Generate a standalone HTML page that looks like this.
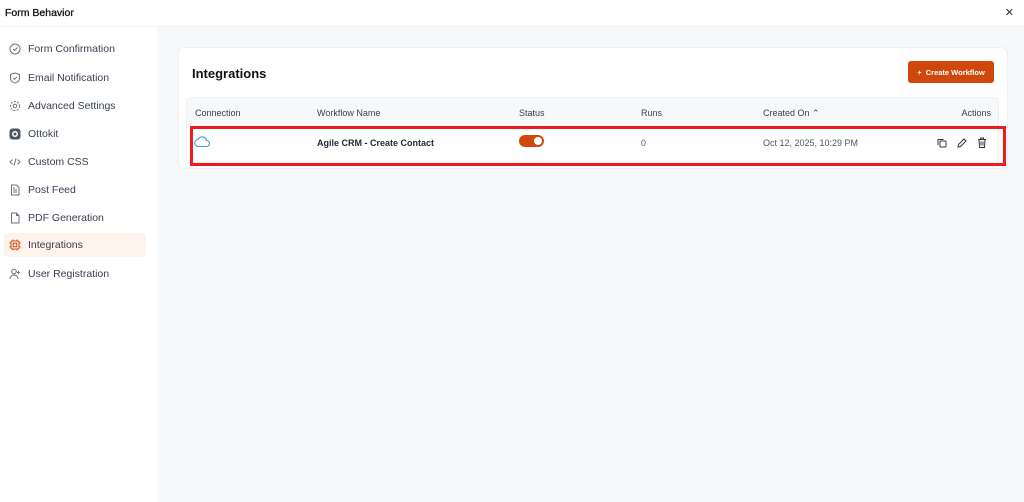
<!DOCTYPE html>
<html><head><style>
*{box-sizing:border-box;margin:0;padding:0}
body{width:1024px;height:502px;overflow:hidden;font-family:"Liberation Sans",sans-serif;background:#fff;position:relative;color:#111827}
.top{position:absolute;left:0;top:0;width:1024px;height:27px;border-bottom:1px solid #eef0f3;background:#fff}
.top .t{position:absolute;left:5px;top:7px;font-size:10.5px;color:#111;-webkit-text-stroke:0.3px #111}
.top .x{position:absolute;right:10px;top:6px;font-size:11px;color:#333}
.side{position:absolute;left:0;top:27px;width:157px;height:475px;background:#fff}
.item{position:absolute;left:4px;width:142px;height:24px;border-radius:4px;font-size:10.5px;color:#374151;display:flex;align-items:center}
.item svg{margin-left:5px;margin-right:7px;width:12px;height:12px}
.item.act{background:#fff3ec}
.main{position:absolute;left:157px;top:27px;width:867px;height:475px;background:#f6f8fa}
.card{position:absolute;left:21px;top:20px;width:830px;height:122px;background:#fff;border-radius:6px;border:1px solid #eef0f3}
.card h1{position:absolute;left:13px;top:18px;font-size:13px;font-weight:bold;color:#111}
.btn{position:absolute;left:729px;top:13px;width:86px;height:22px;background:#d0470c;border-radius:3px;color:#fff;font-size:7.5px;font-weight:bold;display:flex;align-items:center;justify-content:center}
.tbl{position:absolute;left:7px;top:49px;width:813px;height:66px;background:#f7f8fa;border-radius:5px;border:1px solid #eef0f3}
.th{position:absolute;top:10px;font-size:9px;color:#374151}
.row{position:absolute;left:0;top:27px;width:811px;height:37px;background:#fff}
.td{position:absolute;top:13px;font-size:9px;color:#111}
.red{position:absolute;left:190px;top:126px;width:816px;height:40px;border:3px solid #ef1c1c}
</style></head><body>
<div class="top"><span class="t">Form Behavior</span><span class="x">✕</span></div>
<div class="side">
<div class="item" style="top:10px"><svg viewBox="0 0 12 12" fill="none" stroke="#6b7280" stroke-width="1"><circle cx="6" cy="6" r="5"/><path d="M4 6l1.5 1.5L8.5 4.5"/></svg>Form Confirmation</div>
<div class="item" style="top:39px"><svg viewBox="0 0 12 12" fill="none" stroke="#6b7280" stroke-width="1"><path d="M6 1l4.5 1.5v3.5c0 3-2.5 4.5-4.5 5-2-.5-4.5-2-4.5-5V2.5z"/><path d="M4.2 6l1.3 1.3L8 4.8"/></svg>Email Notification</div>
<div class="item" style="top:67px"><svg viewBox="0 0 12 12" fill="none" stroke="#6b7280" stroke-width="1"><circle cx="6" cy="6" r="1.8"/><circle cx="6" cy="6" r="4.5" stroke-dasharray="2 1.3"/></svg>Advanced Settings</div>
<div class="item" style="top:95px"><svg viewBox="0 0 12 12"><rect x="0.5" y="0.5" width="11" height="11" rx="3" fill="#4b5563"/><circle cx="6" cy="6" r="3" fill="#fff"/><circle cx="6" cy="6" r="1.5" fill="#4b5563"/></svg>Ottokit</div>
<div class="item" style="top:123px"><svg viewBox="0 0 12 12" fill="none" stroke="#6b7280" stroke-width="1"><path d="M3.5 3.5L1 6l2.5 2.5M8.5 3.5L11 6 8.5 8.5M7 2.5L5 9.5"/></svg>Custom CSS</div>
<div class="item" style="top:151px"><svg viewBox="0 0 12 12" fill="none" stroke="#6b7280" stroke-width="1"><path d="M2.5 1h5l2.5 2.5V11h-7.5z"/><path d="M4 6h4M4 8h4M4 4h2"/></svg>Post Feed</div>
<div class="item" style="top:179px"><svg viewBox="0 0 12 12" fill="none" stroke="#6b7280" stroke-width="1"><path d="M2.5 1h5l2.5 2.5V11h-7.5z"/><path d="M7.5 1v2.5H10"/></svg>PDF Generation</div>
<div class="item act" style="top:206px"><svg viewBox="0 0 12 12" fill="none" stroke="#d0470c" stroke-width="1"><rect x="2" y="2" width="8" height="8" rx="1.5"/><rect x="4.2" y="4.2" width="3.6" height="3.6"/><path d="M4 0.5v1.5M8 0.5v1.5M4 10v1.5M8 10v1.5M0.5 4h1.5M0.5 8h1.5M10 4h1.5M10 8h1.5"/></svg>Integrations</div>
<div class="item" style="top:235px"><svg viewBox="0 0 12 12" fill="none" stroke="#6b7280" stroke-width="1"><circle cx="5" cy="3.5" r="2.3"/><path d="M1 11c0-2.5 1.8-4 4-4s4 1.5 4 4M9.5 3v3M8 4.5h3"/></svg>User Registration</div>
</div>
<div class="main"><div class="card">
<h1>Integrations</h1>
<div class="btn">+&nbsp;&nbsp;Create Workflow</div>
<div class="tbl">
<span class="th" style="left:8px">Connection</span>
<span class="th" style="left:130px">Workflow Name</span>
<span class="th" style="left:332px">Status</span>
<span class="th" style="left:454px">Runs</span>
<span class="th" style="left:576px">Created On ⌃</span>
<span class="th" style="right:7px">Actions</span>
<div class="row">
<svg style="position:absolute;left:7px;top:10px" width="17" height="13" viewBox="0 0 17 13" fill="none" stroke="#3b9be0" stroke-width="1.1"><path d="M4.5 11.5h8a3 3 0 000-6 4.5 4.5 0 00-8.5-1 3.5 3.5 0 00.5 7z"/></svg>
<span class="td" style="left:130px;font-weight:bold;color:#1f2937">Agile CRM - Create Contact</span>
<div style="position:absolute;left:332px;top:10px;width:25px;height:12px;border-radius:6px;background:#d0470c"><div style="position:absolute;right:2px;top:2px;width:8px;height:8px;border-radius:50%;background:#fff"></div></div>
<span class="td" style="left:454px;color:#4b5563">0</span>
<span class="td" style="left:576px;color:#4b5563">Oct 12, 2025, 10:29 PM</span>
<svg style="position:absolute;left:750px;top:13px" width="10" height="10" viewBox="0 0 10 10" fill="none" stroke="#333" stroke-width="1"><rect x="3" y="3" width="6" height="6" rx="1"/><path d="M1 7V1.5h5.5"/></svg>
<svg style="position:absolute;left:770px;top:13px" width="10" height="10" viewBox="0 0 10 10" fill="none" stroke="#333" stroke-width="1"><path d="M1 9l.5-2.5L7 1l2 2-5.5 5.5z"/></svg>
<svg style="position:absolute;left:790px;top:12px" width="10" height="11" viewBox="0 0 10 11" fill="none" stroke="#333" stroke-width="1"><path d="M1 2.5h8M3.5 2.5V1h3v1.5M2 2.5l.5 8h5l.5-8M4 4.5v4M6 4.5v4"/></svg>
</div></div>
</div></div>
<div class="red"></div>
</body></html>
